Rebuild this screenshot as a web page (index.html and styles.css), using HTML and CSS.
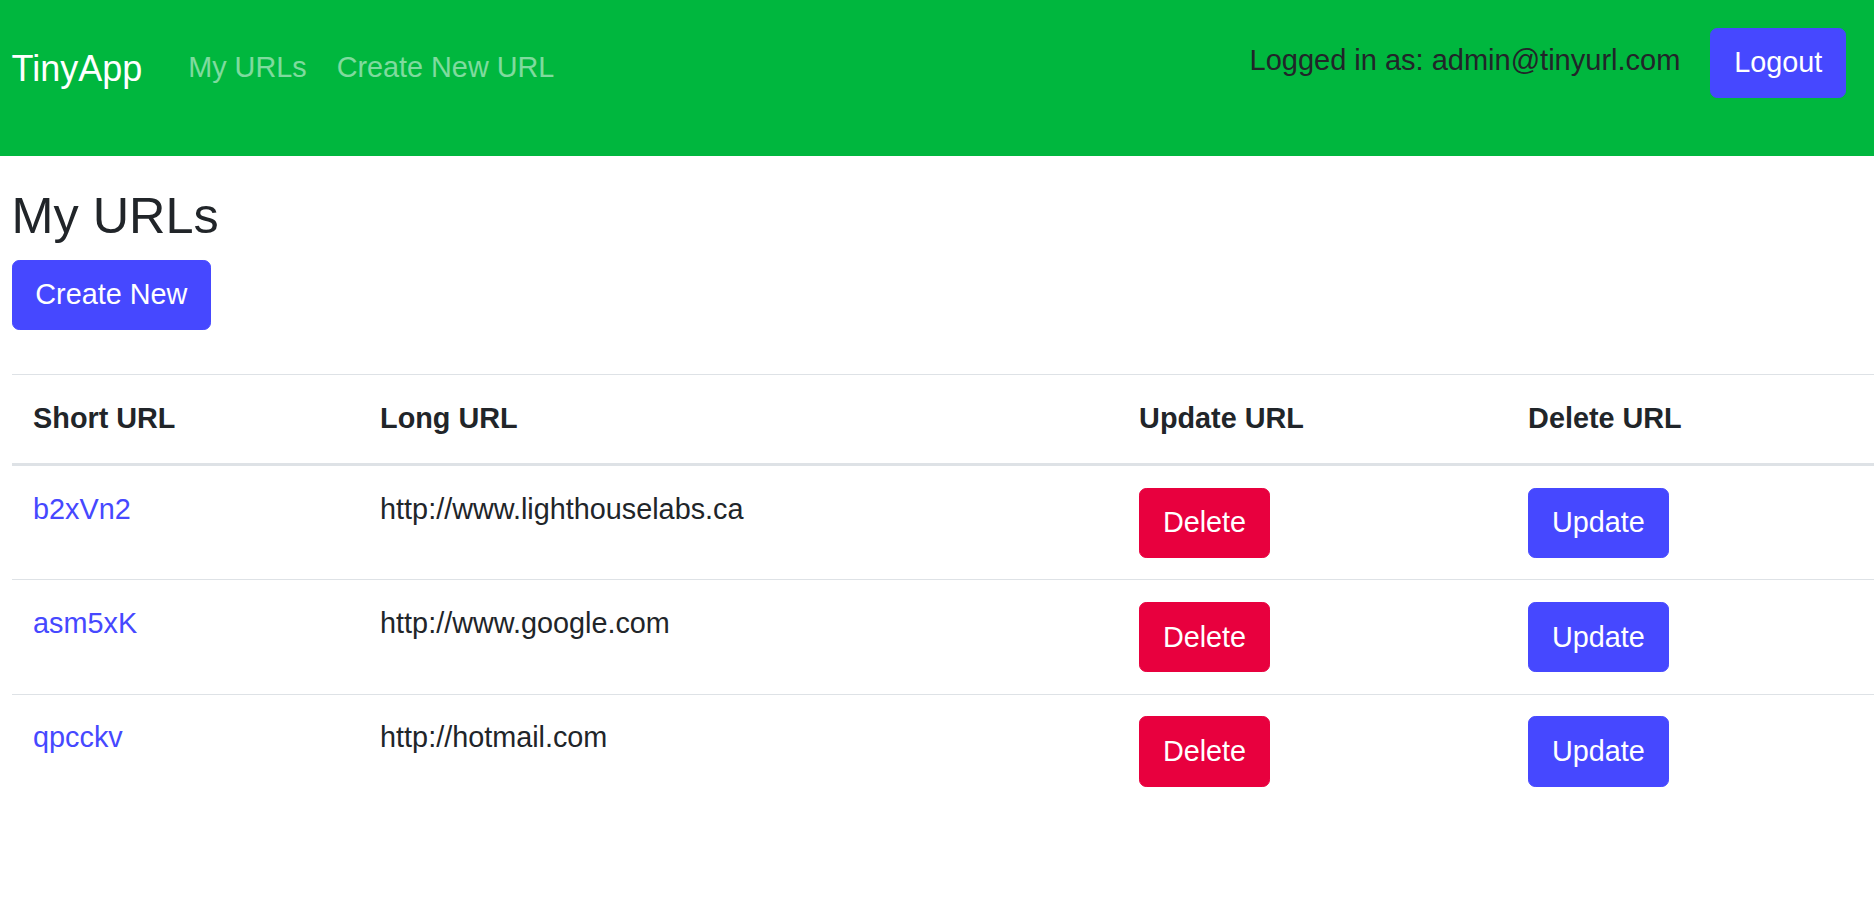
FILE: index.html
```html
<!DOCTYPE html>
<html lang="en">
<head>
<meta charset="utf-8">
<title>TinyApp</title>
<link rel="stylesheet" href="styles.css">
</head>
<body>
<nav class="navbar">
  <div class="nav-left">
    <a class="brand" href="#">TinyApp</a>
    <a class="nav-link" href="#">My URLs</a>
    <a class="nav-link" href="#">Create New URL</a>
  </div>
  <div class="nav-right">
    <span class="user">Logged in as: admin@tinyurl.com</span>
    <button class="btn btn-blue">Logout</button>
  </div>
</nav>
<main class="content">
  <h3 class="title">My URLs</h3>
  <div class="actions">
    <button class="btn btn-blue">Create New</button>
  </div>
  <table class="url-table">
    <colgroup>
      <col class="c1"><col class="c2"><col class="c3"><col class="c4">
    </colgroup>
    <thead>
      <tr><th>Short URL</th><th>Long URL</th><th>Update URL</th><th>Delete URL</th></tr>
    </thead>
    <tbody>
      <tr>
        <td><a class="short" href="#">b2xVn2</a></td>
        <td>http://www.lighthouselabs.ca</td>
        <td><button class="btn btn-red">Delete</button></td>
        <td><button class="btn btn-blue">Update</button></td>
      </tr>
      <tr>
        <td><a class="short" href="#">asm5xK</a></td>
        <td>http://www.google.com</td>
        <td><button class="btn btn-red">Delete</button></td>
        <td><button class="btn btn-blue">Update</button></td>
      </tr>
      <tr>
        <td><a class="short" href="#">qpcckv</a></td>
        <td>http://hotmail.com</td>
        <td><button class="btn btn-red">Delete</button></td>
        <td><button class="btn btn-blue">Update</button></td>
      </tr>
    </tbody>
  </table>
</main>
</body>
</html>
```
FILE: styles.css
```css
html, body {
  margin: 0;
  padding: 0;
  background: #ffffff;
}
body {
  font-family: "Liberation Sans", Arial, sans-serif;
  font-size: 28.8px;
  line-height: 43.2px;
  color: #212529;
}
a { text-decoration: none; }

.navbar {
  display: flex;
  justify-content: space-between;
  align-items: flex-start;
  height: 156px;
  box-sizing: border-box;
  padding: 27.5px 28px 0 11.5px;
  background: #00b73e;
}
.nav-left {
  display: flex;
  align-items: flex-start;
}
.brand {
  font-size: 36px;
  line-height: 54px;
  padding: 9px 0;
  margin-top: 5.5px;
  margin-right: 31px;
  color: #ffffff;
}
.nav-link {
  padding: 14.4px 15px;
  margin-top: 4.5px;
  color: rgba(255, 255, 255, 0.5);
}
.nav-right {
  display: flex;
  align-items: flex-start;
}
.user {
  margin-top: 11px;
  margin-right: 30px;
  color: #212529;
  font-size: 29px;
}

.btn {
  font-family: inherit;
  font-size: 28.8px;
  line-height: 43.2px;
  padding: 12.5px 22.8px;
  border: 1px solid transparent;
  border-radius: 7.2px;
  color: #ffffff;
  cursor: pointer;
  display: inline-block;
  margin: 0;
}
.btn-blue {
  background: #4648ff;
  border-color: #4648ff;
}
.btn-red {
  background: #e8003e;
  border-color: #e8003e;
}

.content {
  padding: 0 0 0 11.5px;
}
.title {
  margin: 30px 0 13px;
  font-size: 50.4px;
  font-weight: 500;
  line-height: 60.5px;
}
.actions {
  margin-bottom: 44px;
}
.url-table {
  width: 100%;
  border-collapse: collapse;
  table-layout: fixed;
}
.c1 { width: 347px; }
.c2 { width: 759px; }
.c3 { width: 389px; }
.url-table th,
.url-table td {
  padding: 21.6px;
  text-align: left;
  vertical-align: top;
  border-top: 1px solid #dee2e6;
}
.url-table th {
  font-weight: bold;
  padding-top: 22.6px;
  padding-bottom: 22.6px;
}
.url-table thead th {
  border-bottom: 3px solid #dee2e6;
}
.short {
  color: #4648ff;
}
```
